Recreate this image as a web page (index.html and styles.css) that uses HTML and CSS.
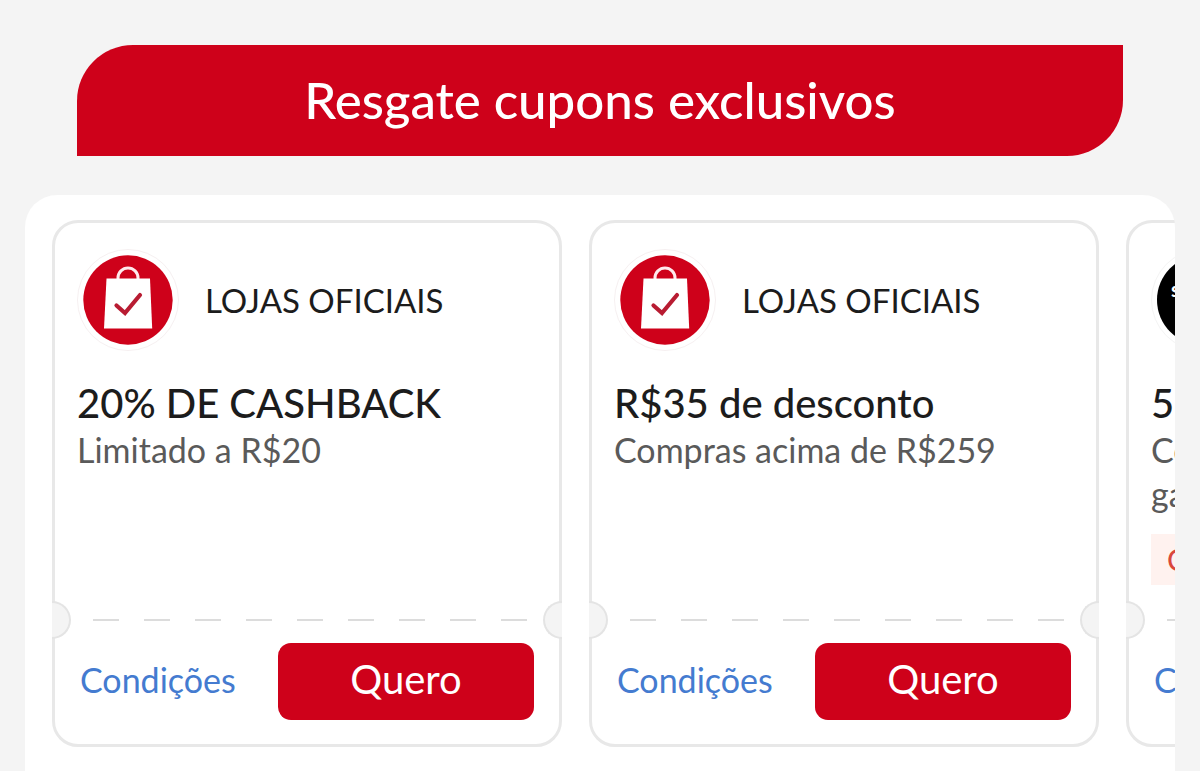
FILE: index.html
```html
<!DOCTYPE html>
<html lang="pt-BR">
<head>
<meta charset="utf-8">
<meta name="viewport" content="width=device-width, initial-scale=1">
<title>Resgate cupons exclusivos</title>
<link rel="stylesheet" href="styles.css">
</head>
<body>
<svg class="symbols" aria-hidden="true">
  <symbol id="bag" viewBox="0 0 102 102">
    <circle cx="51" cy="51" r="50.5" fill="#fff" stroke="#f6f0f1"/>
    <circle cx="51" cy="51" r="44.7" fill="#ce011a"/>
    <path d="M41 31v-2a10 10 0 0 1 20 0v2" fill="none" stroke="#ffe9ec" stroke-width="3"/>
    <path d="M29.500 29.500h43.500l2.200 50H27z" fill="#fff"/>
    <path d="M39.500 56.500l8.500 7.500 15-18" fill="none" stroke="#b81c32" stroke-width="4.200" stroke-linecap="round" stroke-linejoin="miter"/>
  </symbol>
</svg>
<main class="page">
  <h1 class="banner">Resgate cupons exclusivos</h1>
  <section class="coupons" aria-label="Cupons">
    <article class="coupon">
      <div class="details">
        <div class="store">
          <svg class="logo" aria-hidden="true"><use href="#bag"/></svg>
          <span>LOJAS OFICIAIS</span>
        </div>
        <h2 class="title">20% DE CASHBACK</h2>
        <p class="rule">Limitado a R$20</p>
      </div>
      <div class="tear"></div>
      <div class="actions">
        <a class="terms" href="#">Condições</a>
        <button class="claim" type="button">Quero</button>
      </div>
    </article>
    <article class="coupon">
      <div class="details">
        <div class="store">
          <svg class="logo" aria-hidden="true"><use href="#bag"/></svg>
          <span>LOJAS OFICIAIS</span>
        </div>
        <h2 class="title">R$35 de desconto</h2>
        <p class="rule">Compras acima de R$259</p>
      </div>
      <div class="tear"></div>
      <div class="actions">
        <a class="terms" href="#">Condições</a>
        <button class="claim" type="button">Quero</button>
      </div>
    </article>
    <article class="coupon">
      <div class="details">
        <div class="store">
          <div class="logo brand"><span class="disc">s</span></div>
        </div>
        <h2 class="title">5</h2>
        <p class="rule">Co<br>ga</p>
        <span class="tag">C</span>
      </div>
      <div class="tear"></div>
      <div class="actions">
        <a class="terms" href="#">Condições</a>
      </div>
    </article>
  </section>
</main>
</body>
</html>
```

FILE: styles.css
```css
* {
  box-sizing: border-box;
}

body {
  margin: 0;
  background: #f4f4f4;
  color: #1c1c1c;
  font-family: Lato, "Noto Sans", sans-serif;
}

.symbols {
  position: absolute;
  width: 0;
  height: 0;
}

.page {
  display: flex;
  flex-direction: column;
  min-height: 100vh;
  padding: 45px 25px 0;
}

.banner {
  margin: 0 52px 39px;
  padding: 23px 24px 24px;
  border-radius: 56px 0;
  background: #ce011a;
  color: #fff;
  font-size: 51px;
  font-weight: 500;
  line-height: 64px;
  text-align: center;
}

.coupons {
  display: flex;
  flex: 1;
  align-items: stretch;
  gap: 27px;
  padding: 25px 0 24px 27px;
  border-radius: 32px 32px 0 0;
  background: #fff;
  overflow-x: auto;
  scrollbar-width: none;
}

.coupon {
  display: flex;
  flex: 0 0 calc(45vw - 30px);
  flex-direction: column;
  min-width: 480px;
  border: 3px solid #e8e8e8;
  border-radius: 26px;
}

.details {
  display: flex;
  flex: 1;
  flex-direction: column;
  align-items: flex-start;
  padding: 26px 22px 16px;
}

.store {
  display: flex;
  align-items: center;
  gap: 26px;
  margin-bottom: 28px;
  font-size: 33px;
  line-height: 44px;
}

.logo {
  flex: none;
  width: 102px;
  height: 102px;
}

.brand {
  padding: 5px;
  border: 1px solid #f4f4f4;
  border-radius: 50%;
}

.disc {
  display: block;
  height: 90px;
  padding: 12px 14px;
  border-radius: 50%;
  background: #000;
  color: #fff;
  font-size: 20px;
  font-weight: 700;
}

.title {
  margin: 0 0 1px;
  font-size: 40px;
  font-weight: 500;
  line-height: 48px;
}

.rule {
  margin: 0;
  color: #5a5a5a;
  font-size: 34px;
  line-height: 44px;
}

.tag {
  margin-top: 18px;
  padding: 0 16px;
  background: #fff2ef;
  color: #d9483b;
  font-size: 30px;
  line-height: 51px;
}

.tear {
  display: flex;
  align-items: center;
  justify-content: space-between;
  height: 38px;
  margin: 0 -3px;
  background: repeating-linear-gradient(90deg, #dcdcdc 0 26px, transparent 26px 51px) 41px 50% / calc(100% - 75px) 2px no-repeat;
}

.tear::before,
.tear::after {
  box-sizing: border-box;
  width: 19px;
  height: 38px;
  border: 2px solid #e4e4e4;
  background: #f4f4f4;
  content: "";
}

.tear::before {
  border-left: 0;
  border-radius: 0 19px 19px 0;
}

.tear::after {
  border-right: 0;
  border-radius: 19px 0 0 19px;
}

.actions {
  display: flex;
  align-items: center;
  justify-content: space-between;
  min-height: 105px;
  padding: 4px 25px 24px;
}

.terms {
  padding-bottom: 3px;
  color: #447bd0;
  font-size: 34px;
  line-height: 44px;
  text-decoration: none;
}

.claim {
  width: 256px;
  padding: 12px 16px 17px;
  border: 0;
  border-radius: 13px;
  background: #ce011a;
  color: #fff;
  font-family: inherit;
  font-size: 40px;
  line-height: 48px;
}
```
